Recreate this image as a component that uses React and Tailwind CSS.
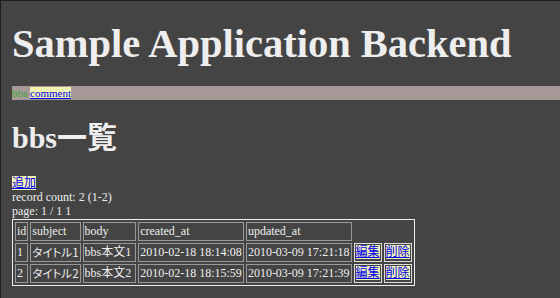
import React from 'react'

const rows = [
  {id: 1, subject: 'タイトル1', body: 'bbs本文1', created: '2010-02-18 18:14:08', updated: '2010-03-09 17:21:18'},
  {id: 2, subject: 'タイトル2', body: 'bbs本文2', created: '2010-02-18 18:15:59', updated: '2010-03-09 17:21:39'},
]

const cell = 'border border-[#999] px-px py-px text-left font-normal whitespace-nowrap'
const linkCell = 'border border-[#ddd] px-px py-px whitespace-nowrap'
const link = 'bg-[#f0f0b0] text-[#0000ee] underline'

const App = () => {
  return (
    <div className="min-h-[298px] bg-[#444] border-l border-t border-[#1e1e1e] pl-[11px] text-[#eeeeee] font-['Liberation_Serif','Noto_Sans_CJK_JP',serif]">
      <h1 className="text-[40.5px] font-bold leading-none pt-[23px]">Sample Application Backend</h1>

      <div className="mt-[21px] h-[14px] bg-[#a69997] text-[11px] leading-[14px]">
        <span className="text-[#3a3]">bbs</span>{' '}
        <a href="#" className={link}>comment</a>
      </div>

      <h2 className="mt-[23px] text-[30px] font-bold leading-none">bbs一覧</h2>

      <div className="mt-[23px] text-[12px] leading-[14px]">
        <a href="#" className={link}>追加</a>
        <p>record count: 2 (1-2)</p>
        <p>page: 1 / 1 1</p>
      </div>

      <table className="mt-[1px] border border-[#eee] border-separate border-spacing-[2px] text-[12px] leading-[15px]">
        <thead>
          <tr>
            <th className={cell}>id</th>
            <th className={cell}>subject</th>
            <th className={cell + ' pr-[4px]'}>body</th>
            <th className={cell}>created_at</th>
            <th className={cell}>updated_at</th>
          </tr>
        </thead>
        <tbody>
          {rows.map((r) => (
            <tr key={r.id}>
              <td className={cell}>{r.id}</td>
              <td className={cell + " [font-feature-settings:'palt'] font-['Noto_Sans_CJK_JP',sans-serif] text-[11.5px]"}>{r.subject}</td>
              <td className={cell + ' pr-[4px]'}>{r.body}</td>
              <td className={cell}>{r.created}</td>
              <td className={cell}>{r.updated}</td>
              <td className={linkCell}><a href="#" className={link}>編集</a></td>
              <td className={linkCell}><a href="#" className={link}>削除</a></td>
            </tr>
          ))}
        </tbody>
      </table>
    </div>
  )
}

export default App
